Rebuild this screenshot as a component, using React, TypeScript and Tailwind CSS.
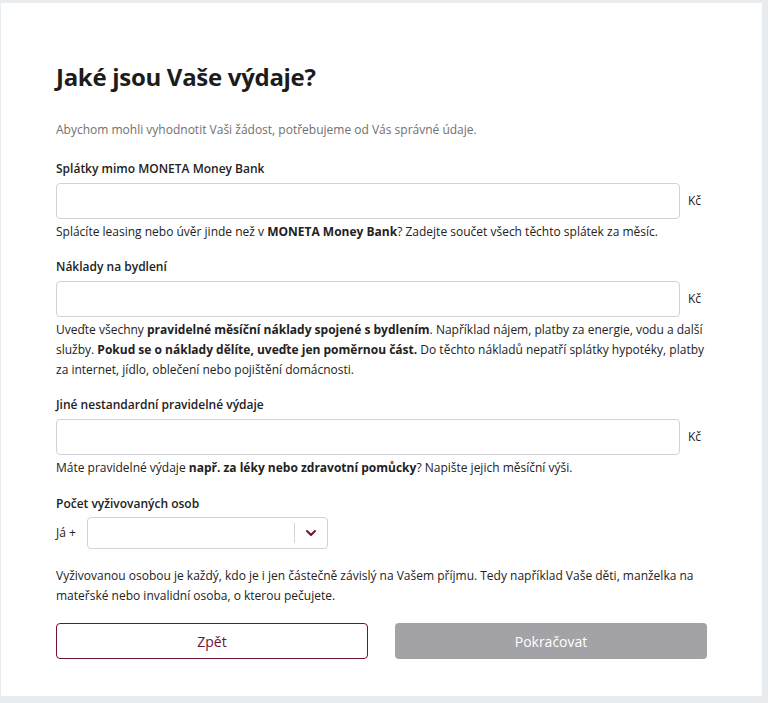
import { ChevronDown } from "lucide-react";

const font = { fontFamily: '"Open Sans", "Noto Sans", sans-serif' };

function MoneyField({ label, children }: { label: string; children: React.ReactNode }) {
  return (
    <div className="mt-[15px]">
      <label className="block text-[12px] leading-[20px] font-semibold text-[#222]">{label}</label>
      <div className="mt-[4px] flex items-center">
        <input className="h-[36px] w-[624px] rounded-[4px] border border-[#d3d1da] bg-white px-3 text-[12px] outline-none" />
        <span className="ml-[8px] text-[12px] text-[#222]">Kč</span>
      </div>
      <p className="mt-[3px] text-[12px] leading-[20px] text-[#222]">{children}</p>
    </div>
  );
}

export default function App() {
  return (
    <div className="min-h-[703px] bg-[#e8ecef] pt-[3px]" style={font}>
      <div className="ml-[1px] w-[761px] bg-white pl-[55px] pt-[58px] pb-[37px]">
        <div className="w-[651px]">
          <h1 className="text-[24px] leading-[32px] font-bold text-[#1c1c1c] tracking-[-0.3px]">Jaké jsou Vaše výdaje?</h1>
          <p className="mt-[27px] text-[12px] leading-[20px] text-[#707070]">
            Abychom mohli vyhodnotit Vaši žádost, potřebujeme od Vás správné údaje.
          </p>

          <div className="pt-[4px]">
            <MoneyField label="Splátky mimo MONETA Money Bank">
              Splácíte leasing nebo úvěr jinde než v <b>MONETA Money Bank</b>? Zadejte součet všech těchto splátek za měsíc.
            </MoneyField>
            <MoneyField label="Náklady na bydlení">
              Uveďte všechny <b>pravidelné měsíční náklady spojené s bydlením</b>. Například nájem, platby za energie, vodu a další
              služby. <b>Pokud se o náklady dělíte, uveďte jen poměrnou část.</b> Do těchto nákladů nepatří splátky hypotéky, platby
              za internet, jídlo, oblečení nebo pojištění domácnosti.
            </MoneyField>
            <MoneyField label="Jiné nestandardní pravidelné výdaje">
              Máte pravidelné výdaje <b>např. za léky nebo zdravotní pomůcky</b>? Napište jejich měsíční výši.
            </MoneyField>
          </div>

          <div className="mt-[16px]">
            <label className="block text-[12px] leading-[20px] font-semibold text-[#222]">Počet vyživovaných osob</label>
            <div className="mt-[3px] flex items-center">
              <span className="w-[31px] text-[12px] text-[#222]">Já +</span>
              <div className="flex h-[32px] w-[241px] items-center rounded-[4px] border border-[#d3d1da] bg-white">
                <div className="flex-1" />
                <div className="h-[20px] w-px bg-[#d3d1da]" />
                <div className="flex w-[32px] items-center justify-center">
                  <ChevronDown className="h-[16px] w-[16px] text-[#6f1239]" strokeWidth={3} />
                </div>
              </div>
            </div>
          </div>

          <p className="mt-[17px] text-[12px] leading-[20px] text-[#222]">
            Vyživovanou osobou je každý, kdo je i jen částečně závislý na Vašem příjmu. Tedy například Vaše děti, manželka na
            mateřské nebo invalidní osoba, o kterou pečujete.
          </p>

          <div className="mt-[17px] flex gap-[27px]">
            <button className="h-[36px] w-[312px] rounded-[4px] border border-[#6f1239] bg-white text-[14px] text-[#6f1239]">
              Zpět
            </button>
            <button className="h-[36px] w-[312px] rounded-[4px] bg-[#a3a2a7] text-[14px] text-white">Pokračovat</button>
          </div>
        </div>
      </div>
    </div>
  );
}
